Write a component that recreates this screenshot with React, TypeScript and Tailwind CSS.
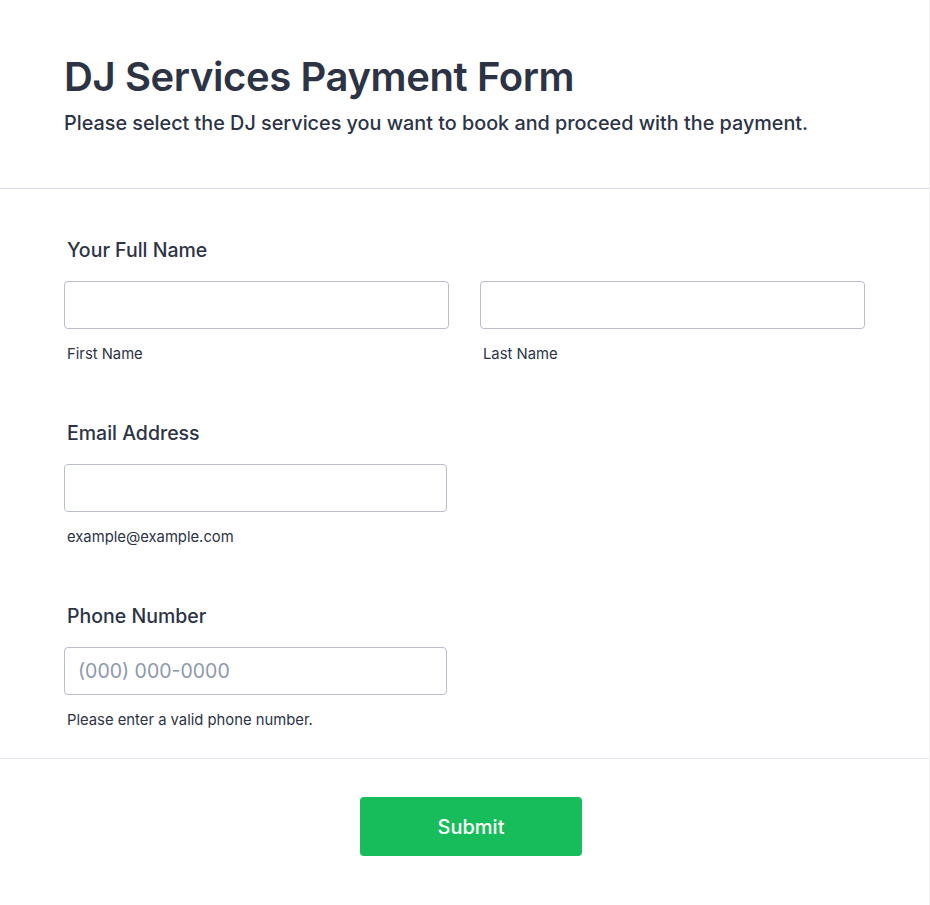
import React from 'react';

const font = { fontFamily: 'Inter, "Noto Sans", sans-serif' };

function Label({ children }: { children: React.ReactNode }) {
  return <div className="pl-[3px] text-[19.5px] leading-[27px] font-medium text-[#2c3345]">{children}</div>;
}

function Sub({ children }: { children: React.ReactNode }) {
  return <div className="mt-[15px] pl-[3px] text-[14.8px] leading-[21px] text-[#2c3345]">{children}</div>;
}

function Input({ className = '', placeholder }: { className?: string; placeholder?: string }) {
  return (
    <input
      type="text"
      placeholder={placeholder}
      className={`h-12 rounded-[4px] border border-[#b8bdc9] bg-white px-[13px] text-[19.5px] text-[#2c3345] outline-none placeholder:text-[#8c99ad] ${className}`}
    />
  );
}

export default function App() {
  return (
    <div className="min-h-[905px] w-[930px] border-r border-[#f1f1f4] bg-white" style={font}>
      <header className="border-b border-[#d9dae5] pl-16 pt-[53px] pb-[51px]">
        <h1 className="text-[40px] leading-[48px] font-semibold tracking-[-0.01em] text-[#2c3345]">
          DJ Services Payment Form
        </h1>
        <p className="mt-[9px] text-[19.8px] leading-[27px] font-medium text-[#2c3345]">
          Please select the DJ services you want to book and proceed with the payment.
        </p>
      </header>

      <main className="border-b border-[#e6e6f0] pl-16 pt-[48px] pb-[27px]">
        <section>
          <Label>Your Full Name</Label>
          <div className="mt-[17px] flex gap-[31px]">
            <div className="flex w-[385px] flex-col">
              <Input className="w-full" />
              <Sub>First Name</Sub>
            </div>
            <div className="flex w-[385px] flex-col">
              <Input className="w-full" />
              <Sub>Last Name</Sub>
            </div>
          </div>
        </section>

        <section className="mt-[55px]">
          <Label>Email Address</Label>
          <div className="mt-[17px] flex w-[383px] flex-col">
            <Input className="w-full" />
            <Sub>example@example.com</Sub>
          </div>
        </section>

        <section className="mt-[55px]">
          <Label>Phone Number</Label>
          <div className="mt-[17px] flex w-[383px] flex-col">
            <Input className="w-full" placeholder="(000) 000-0000" />
            <Sub>Please enter a valid phone number.</Sub>
          </div>
        </section>
      </main>

      <footer className="flex pt-[38px] pb-[50px] pl-[360px]">
        <button
          type="button"
          className="h-[59px] w-[222px] rounded-[4px] bg-[#18bd5b] text-[20px] font-medium text-white"
        >
          Submit
        </button>
      </footer>
    </div>
  );
}
